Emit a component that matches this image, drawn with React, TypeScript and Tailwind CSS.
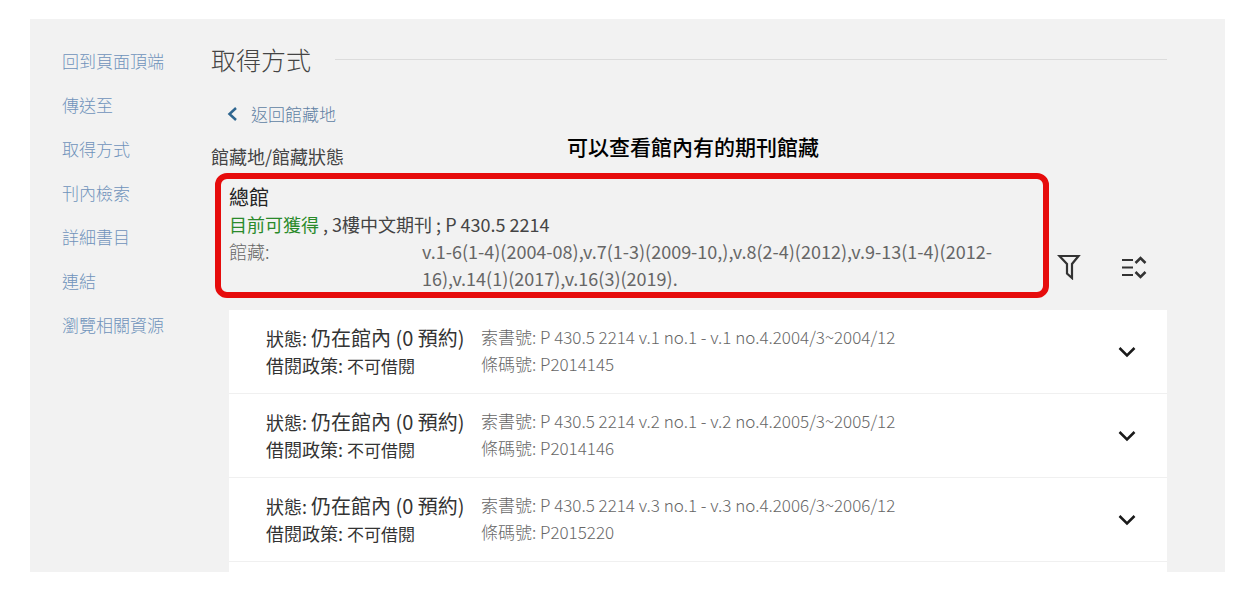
const navLinks = ['回到頁面頂端', '傳送至', '取得方式', '刊內檢索', '詳細書目', '連結', '瀏覽相關資源'];

const items = [
  { callNumber: 'P 430.5 2214 v.1 no.1 - v.1 no.4.2004/3~2004/12', barcode: 'P2014145' },
  { callNumber: 'P 430.5 2214 v.2 no.1 - v.2 no.4.2005/3~2005/12', barcode: 'P2014146' },
  { callNumber: 'P 430.5 2214 v.3 no.1 - v.3 no.4.2006/3~2006/12', barcode: 'P2015220' }
];

function FilterIcon() {
  return (
    <svg width="24" height="26" viewBox="0 0 24 26" fill="none" stroke="#333" strokeWidth="2.200">
      <path d="M2.500 2h19l-6.500 8v14l-5-4.500v-9.500z" />
    </svg>
  );
}

function ExpandIcon() {
  return (
    <svg width="26" height="26" viewBox="0 0 26 26" fill="none" stroke="#333" strokeWidth="2.200">
      <path d="M1 6h11M1 13.500h11M1 21h11" />
      <path d="M14.500 9l5-5 5 5M14.500 18l5 5 5-5" strokeWidth="2.500" />
    </svg>
  );
}

function ChevronDown() {
  return (
    <svg width="18" height="12" viewBox="0 0 18 12" fill="none" stroke="#1a1a1a" strokeWidth="2.500">
      <path d="M1.500 2l7.500 7.500 7.500-7.500" />
    </svg>
  );
}

function SideNav() {
  return (
    <nav className="w-[149px] shrink-0 pt-[7px]">
      <ul className="space-y-5 text-[17px] leading-6 font-light text-[#6f93bb]">
        {navLinks.map((link) => (
          <li key={link}>
            <a href="#top">{link}</a>
          </li>
        ))}
      </ul>
    </nav>
  );
}

export default function App() {
  return (
    <div className="bg-white pt-[19px] pr-[35px] pb-5 pl-[30px] font-['Noto_Sans_CJK_TC',sans-serif]">
      <div className="flex bg-[#f2f2f2] pt-[23px] pr-[58px] pl-8">
        <SideNav />
        <main className="min-w-0 flex-1">
          <div className="flex items-center gap-6">
            <h1 className="text-[25px] leading-[34px] font-light text-[#444]">取得方式</h1>
            <div className="h-px flex-1 bg-[#dcdcdc]" />
          </div>

          <a href="#locations" className="mt-[26px] ml-4 flex items-center gap-3 text-[17px] leading-6 font-light text-[#5f7fa3]">
            <svg width="12" height="14" viewBox="0 0 12 14" fill="none" stroke="#2f6690" strokeWidth="2.500">
              <path d="M9 1l-6.500 6 6.500 6" />
            </svg>
            返回館藏地
          </a>

          <div className="mt-2 flex items-start leading-6">
            <h2 className="w-[356px] pt-[10px] text-[18px] text-[#444]">館藏地/館藏狀態</h2>
            <p className="text-[21px] font-medium text-black">可以查看館內有的期刊館藏</p>
          </div>

          <div className="mt-[5px] ml-1 flex items-end">
            <section className="flex-1 rounded-xl border-6 border-[#e60c0c] pt-1 pr-6 pl-2 text-[18px] leading-[27px]">
              <h3 className="text-[20px] leading-7 text-[#222]">總館</h3>
              <p className="text-[#444]">
                <span className="text-[#2a8a2a]">目前可獲得</span> , 3樓中文期刊 ; P 430.5 2214
              </p>
              <dl className="flex text-[#666]">
                <dt className="w-[193px] shrink-0 font-light">館藏:</dt>
                <dd>v.1-6(1-4)(2004-08),v.7(1-3)(2009-10,),v.8(2-4)(2012),v.9-13(1-4)(2012-16),v.14(1)(2017),v.16(3)(2019).</dd>
              </dl>
            </section>
            <div className="flex w-[118px] justify-between pr-5 pb-[18px] pl-2">
              <button type="button" aria-label="篩選">
                <FilterIcon />
              </button>
              <button type="button" aria-label="全部展開">
                <ExpandIcon />
              </button>
            </div>
          </div>

          <ul className="mt-3 ml-[18px] bg-white pb-[10px]">
            {items.map((item) => (
              <li key={item.barcode} className="flex h-[84px] items-center border-b border-[#f0f0f0] pr-[31px] pl-[37px]">
                <div className="w-[215px] shrink-0 text-[18px] leading-[27px] text-[#333]">
                  <p>
                    狀態: <span className="text-[20px]">仍在館內 (0 預約)</span>
                  </p>
                  <p>
                    借閱政策: <span className="text-[17px]">不可借閱</span>
                  </p>
                </div>
                <div className="flex-1 pb-[3px] text-[17px] leading-[27px] font-light text-[#666]">
                  <p>索書號: {item.callNumber}</p>
                  <p>條碼號: {item.barcode}</p>
                </div>
                <button type="button" aria-label="展開">
                  <ChevronDown />
                </button>
              </li>
            ))}
          </ul>
        </main>
      </div>
    </div>
  );
}
